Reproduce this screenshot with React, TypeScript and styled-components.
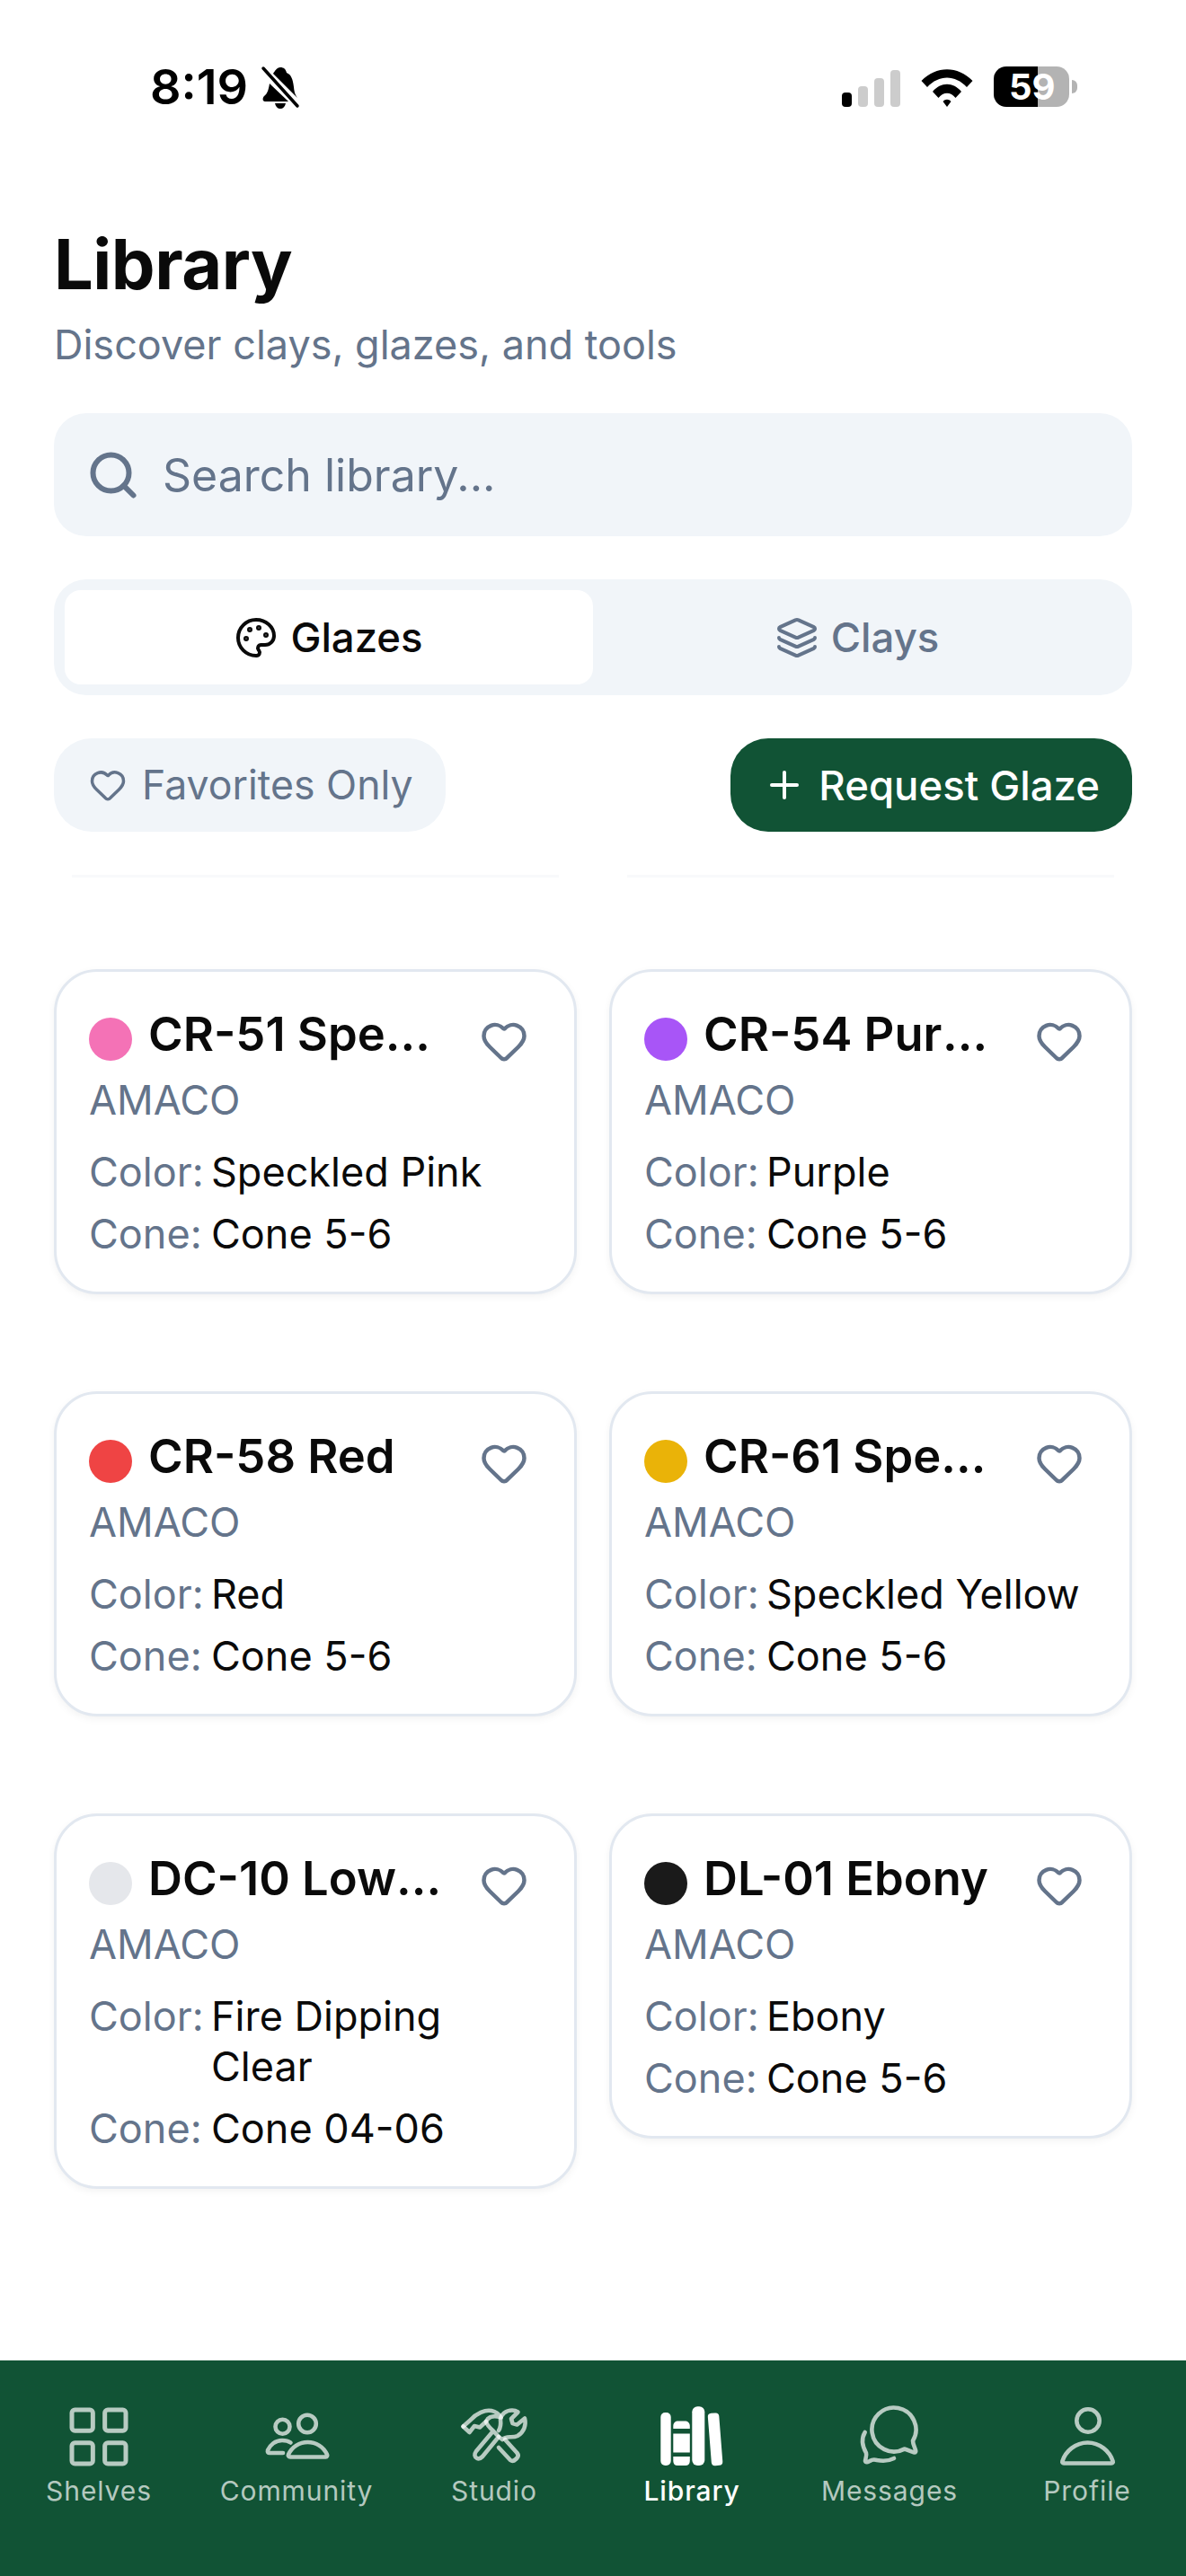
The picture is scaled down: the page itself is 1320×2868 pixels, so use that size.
import React from "react";
import styled, { createGlobalStyle } from "styled-components";
import { Heart, Layers, LayoutGrid, Palette, Plus, Search } from "lucide-react";

const glazes = [
  { name: "CR-51 Speckled Pink", swatch: "#f472b6", color: "Speckled Pink", cone: "Cone 5-6" },
  { name: "CR-54 Purple", swatch: "#a855f7", color: "Purple", cone: "Cone 5-6" },
  { name: "CR-58 Red", swatch: "#ef4444", color: "Red", cone: "Cone 5-6" },
  { name: "CR-61 Speckled Yellow", swatch: "#eab308", color: "Speckled Yellow", cone: "Cone 5-6" },
  { name: "DC-10 Low Fire Dipping Clear", swatch: "#e5e7eb", color: "Fire Dipping Clear", cone: "Cone 04-06" },
  { name: "DL-01 Ebony", swatch: "#1a1a1a", color: "Ebony", cone: "Cone 5-6" },
];

const ShelvesIcon = () => <LayoutGrid size={80} strokeWidth={1.5} />;

const CommunityIcon = () => (
  <NavSvg viewBox="0 0 100 85">
    <circle cx="62" cy="28.5" r="9.8" />
    <circle cx="34.5" cy="31.7" r="8" />
    <path d="M43 65.5H82.5C84 65.5 84.6 64 84 62.7C80 54 71.5 49 62.5 49S45 54 41 62.7C40.4 64 41.2 65.5 43 65.5Z" />
    <path d="M43.5 49.5C41 47.7 37.5 47 34 47C26.5 47 20.5 52 18 58C17.5 60 18.5 61 20 61H35" />
  </NavSvg>
);

const StudioIcon = () => (
  <NavSvg viewBox="0 0 100 85">
    <path d="M15.5 31.5L24 24C30 17 40 12.5 47 14C52 15 55.5 18 57.5 21.5C52 19.5 46 20 43 23L41 26C42 30 45 33 49 36.5L30 59C27.5 62.5 28 65.5 31 67C33 68 35 67 37 65L55 43L49 36.5" />
    <path d="M41 26L34 32.5L28 31L22.5 38L15.5 31.5" />
    <path d="M55 36C57 33 57.5 28 57 24C57.5 18 63 13.5 70 13.5C73 13.5 75 14.5 76.5 15.5L69 23L70.5 28L75.5 29.5L84 22.5C86 30 83 38 76 42C70 45 63.5 41 59 46L55 43" />
    <path d="M55 55L68 69C70 70.5 72 70 74 68L75.5 66.5C77 65 77 63 75.5 61L62 46" />
  </NavSvg>
);

const LibraryIcon = () => (
  <NavSvg viewBox="0 0 100 85" $filled>
    <rect x="15.3" y="16" width="11.4" height="59" rx="5" />
    <path d="M29.3 34V31C29.3 27.5 31.5 25.5 35 25.5H42C45.5 25.5 47.8 27.5 47.8 31V34Z" />
    <rect x="29.3" y="39.5" width="18.5" height="21" />
    <path d="M29.3 65H47.8V70C47.8 73 46 75 43 75H34C31 75 29.3 73 29.3 70Z" />
    <rect x="50.3" y="9.3" width="14" height="65.7" rx="6" />
    <rect x="69.8" y="16.5" width="12.5" height="58.6" rx="4" transform="rotate(-4.5 76 45.7)" />
  </NavSvg>
);

const MessagesIcon = () => (
  <NavSvg viewBox="0 0 100 85">
    <path d="M76 47.5A24.5 24.5 0 1 0 66.5 56.6C70 57.5 75 60 77.5 60.5C79 60.5 79.5 59.5 79 58C78 54 76 51 76 47.5Z" />
    <path d="M22.7 38C19 44 19 52 24 61C25 64 23 68 23 70C23.5 72 26 71.5 28 70C31 68 33 68 36 69C43 70.5 50 69.5 55 67" />
  </NavSvg>
);

const ProfileIcon = () => (
  <NavSvg viewBox="0 0 100 85">
    <circle cx="51" cy="25" r="12.7" />
    <path d="M24 72.5H77C78.5 72.5 79 71.5 78.6 70.2C75 59 64 49.5 50.5 49.5S26 59 22.4 70.2C22 71.5 22.6 72.5 24 72.5Z" />
  </NavSvg>
);

const navItems = [
  { label: "Shelves", Icon: ShelvesIcon },
  { label: "Community", Icon: CommunityIcon },
  { label: "Studio", Icon: StudioIcon },
  { label: "Library", Icon: LibraryIcon, active: true },
  { label: "Messages", Icon: MessagesIcon },
  { label: "Profile", Icon: ProfileIcon },
];

const App: React.FC = () => {
  return (
    <Page>
      <GlobalStyle />
      <StatusBar>
        <TimeGroup>
          <Time>8:19</Time>
          <svg width="44" height="48" viewBox="0 0 44 48">
            <path d="M22 2C26 2 28 4 29 8C34 10 36 15 37 24C37.500 30 39 33 41 36L14 9C16 6 18 2 22 2ZM10 20L31 40H5C2 40 2 36 4 34C8 31 9 26 10 20ZM16 42H28C27 46 25 48 22 48C19 48 17 46 16 42Z" fill="#000" />
            <path d="M3 3L41 45" stroke="#000" strokeWidth="3.500" strokeLinecap="round" />
          </svg>
        </TimeGroup>
        <StatusRight>
          <SignalBars>
            {[16, 23, 32, 41].map((h, i) => (
              <SignalBar key={h} $on={i === 0} style={{ height: h }} />
            ))}
          </SignalBars>
          <svg width="58" height="42" viewBox="0 0 58 42">
            <path d="M0.500 13C17 -4 41 -4 57.500 13L51 20C38 6 20 6 7 20Z" fill="#000" />
            <path d="M13 25C22 14 36 14 45 25L38.500 32C33 25 25 25 19.500 32Z" fill="#000" />
            <path d="M24.500 36C27 33 31 33 33.500 36L29 42Z" fill="#000" />
          </svg>
          <Battery>
            <BatteryBody>59</BatteryBody>
            <BatteryNub />
          </Battery>
        </StatusRight>
      </StatusBar>

      <Main>
        <Title>Library</Title>
        <Subtitle>Discover clays, glazes, and tools</Subtitle>

        <SearchBox>
          <Search size={60} strokeWidth={2.4} />
          <SearchText>Search library...</SearchText>
        </SearchBox>

        <Tabs>
          <Tab $active>
            <Palette size={48} strokeWidth={2} />
            Glazes
          </Tab>
          <Tab>
            <Layers size={48} strokeWidth={2} />
            Clays
          </Tab>
        </Tabs>

        <Actions>
          <FavoritesButton>
            <Heart size={42} strokeWidth={2} />
            Favorites Only
          </FavoritesButton>
          <RequestButton>
            <Plus size={48} strokeWidth={2} />
            Request Glaze
          </RequestButton>
        </Actions>

        <ScrollEdge>
          <span />
          <span />
        </ScrollEdge>

        <CardGrid>
          {glazes.map((glaze) => (
            <Card key={glaze.name}>
              <CardHeader>
                <Swatch $color={glaze.swatch} />
                <CardTitle>{glaze.name}</CardTitle>
                <FavoriteIcon>
                  <Heart size={54} strokeWidth={2} />
                </FavoriteIcon>
              </CardHeader>
              <Brand>AMACO</Brand>
              <DetailRow>
                <DetailLabel>Color:</DetailLabel>
                <DetailValue>{glaze.color}</DetailValue>
              </DetailRow>
              <DetailRow>
                <DetailLabel>Cone:</DetailLabel>
                <DetailValue>{glaze.cone}</DetailValue>
              </DetailRow>
            </Card>
          ))}
        </CardGrid>
      </Main>

      <BottomNav>
        {navItems.map(({ label, Icon, active }) => (
          <NavItem key={label} $active={active}>
            <NavIconSlot>
              <Icon />
            </NavIconSlot>
            {label}
          </NavItem>
        ))}
      </BottomNav>
    </Page>
  );
};

const GlobalStyle = createGlobalStyle`
  html, body {
    margin: 0;
    padding: 0;
    background: #fff;
  }
  * {
    box-sizing: border-box;
  }
`;

const Page = styled.div`
  width: 1320px;
  height: 2868px;
  display: flex;
  flex-direction: column;
  overflow: hidden;
  background: #fff;
  font-family: Inter, "Liberation Sans", sans-serif;
  color: #0a0a0a;
`;

const StatusBar = styled.div`
  height: 252px;
  flex-shrink: 0;
  display: flex;
  justify-content: space-between;
  align-items: flex-start;
  padding: 72px 121px 0 167px;
`;

const TimeGroup = styled.div`
  display: flex;
  align-items: center;
  gap: 14px;
  height: 50px;
`;

const Time = styled.span`
  font-size: 54px;
  font-weight: 600;
  line-height: 50px;
  color: #000;
`;

const StatusRight = styled.div`
  display: flex;
  align-items: flex-end;
  gap: 23px;
  height: 47px;
`;

const SignalBars = styled.div`
  display: flex;
  align-items: flex-end;
  gap: 7px;
`;

const SignalBar = styled.div<{ $on: boolean }>`
  width: 11px;
  border-radius: 4px;
  background: ${(props) => (props.$on ? "#000" : "#cccccc")};
`;

const Battery = styled.div`
  display: flex;
  align-items: center;
  gap: 3px;
`;

const BatteryBody = styled.div`
  width: 84px;
  height: 45px;
  border-radius: 14px;
  background: linear-gradient(90deg, #000 0 58.500%, #b3b3b3 58.500% 100%);
  color: #fff;
  font-size: 40px;
  font-weight: 700;
  line-height: 45px;
  padding-left: 17px;
`;

const BatteryNub = styled.div`
  width: 6px;
  height: 15px;
  border-radius: 0 8px 8px 0;
  background: #b3b3b3;
`;

const Main = styled.main`
  flex: 1;
  min-height: 0;
  padding: 0 60px;
  overflow: hidden;
`;

const Title = styled.h1`
  margin: 0;
  font-size: 77.500px;
  font-weight: 700;
  line-height: 84px;
  letter-spacing: -0.5px;
`;

const Subtitle = styled.p`
  margin: 18px 0 0;
  font-size: 45px;
  line-height: 60px;
  color: #64748b;
`;

const SearchBox = styled.div`
  margin-top: 46px;
  height: 137px;
  padding: 0 36px;
  display: flex;
  align-items: center;
  gap: 25px;
  border-radius: 36px;
  background: #f1f5f9;
  color: #64748b;
`;

const SearchText = styled.span`
  font-size: 50px;
  line-height: 60px;
`;

const Tabs = styled.div`
  margin-top: 48px;
  height: 129px;
  padding: 12px;
  display: grid;
  grid-template-columns: minmax(0, 1fr) minmax(0, 1fr);
  border-radius: 36px;
  background: #f1f5f9;
`;

const Tab = styled.div<{ $active?: boolean }>`
  display: flex;
  align-items: center;
  justify-content: center;
  gap: 14px;
  border-radius: 18px;
  font-size: 45.500px;
  font-weight: 500;
  background: ${(props) => (props.$active ? "#fff" : "transparent")};
  color: ${(props) => (props.$active ? "#0a0a0a" : "#64748b")};
`;

const Actions = styled.div`
  margin-top: 48px;
  display: flex;
  justify-content: space-between;
`;

const ActionButton = styled.div`
  height: 104px;
  padding: 0 36px;
  display: flex;
  align-items: center;
  border-radius: 42px;
`;

const FavoritesButton = styled(ActionButton)`
  gap: 17px;
  padding-left: 39px;
  font-size: 44.600px;
  background: #f1f5f9;
  color: #64748b;
`;

const RequestButton = styled(ActionButton)`
  gap: 14px;
  font-size: 45.500px;
  background: #115335;
  color: #fff;
  font-weight: 500;
`;

const ScrollEdge = styled.div`
  margin-top: 48px;
  display: grid;
  grid-template-columns: minmax(0, 1fr) minmax(0, 1fr);
  gap: 36px;

  span {
    height: 3px;
    margin: 0 20px;
    background: #f8f9fb;
  }
`;

const CardGrid = styled.div`
  margin-top: 102px;
  display: grid;
  grid-template-columns: minmax(0, 1fr) minmax(0, 1fr);
  column-gap: 36px;
  row-gap: 108px;
  align-items: start;
`;

const Card = styled.article`
  padding: 36px;
  border: 3px solid #e2e8f0;
  border-radius: 48px;
  background: #fff;
  box-shadow: 0 3px 9px rgba(0, 0, 0, 0.05);
`;

const CardHeader = styled.div`
  display: flex;
  align-items: flex-start;
  height: 79px;
`;

const Swatch = styled.div<{ $color: string }>`
  width: 48px;
  height: 48px;
  margin-top: 15px;
  margin-right: 18px;
  border-radius: 50%;
  flex-shrink: 0;
  background: ${(props) => props.$color};
`;

const CardTitle = styled.h2`
  flex: 1;
  min-width: 0;
  margin: 0;
  font-size: 52.500px;
  font-weight: 600;
  line-height: 66px;
  white-space: nowrap;
  overflow: hidden;
  text-overflow: ellipsis;
`;

const FavoriteIcon = styled.div`
  margin: 14px 15px 0 42px;
  height: 54px;
  color: #64748b;
`;

const Brand = styled.div`
  font-size: 45px;
  line-height: 56px;
  color: #64748b;
`;

const DetailRow = styled.div`
  display: flex;
  margin-top: 13px;
  font-size: 45px;
  line-height: 56px;

  &:nth-of-type(3) {
    margin-top: 24px;
  }
`;

const DetailLabel = styled.span`
  width: 136px;
  flex-shrink: 0;
  color: #64748b;
`;

const DetailValue = styled.span`
  color: #0a0a0a;
`;

const BottomNav = styled.nav`
  height: 240px;
  flex-shrink: 0;
  display: grid;
  grid-template-columns: repeat(6, minmax(0, 1fr));
  padding-top: 42px;
  background: #115335;
`;

const NavItem = styled.div<{ $active?: boolean }>`
  display: flex;
  flex-direction: column;
  align-items: center;
  font-size: 30px;
  line-height: 40px;
  letter-spacing: 0.9px;
  font-weight: ${(props) => (props.$active ? 500 : 400)};
  color: ${(props) => (props.$active ? "#fff" : "rgba(255, 255, 255, 0.7)")};
`;

const NavIconSlot = styled.div`
  height: 85px;
  display: flex;
  align-items: center;
  justify-content: center;
  margin-bottom: -2px;
`;

const NavSvg = styled.svg<{ $filled?: boolean }>`
  width: 100px;
  height: 85px;
  fill: ${(props) => (props.$filled ? "currentColor" : "none")};
  stroke: ${(props) => (props.$filled ? "none" : "currentColor")};
  stroke-width: 4.6;
  stroke-linecap: round;
  stroke-linejoin: round;
`;

export default App;
